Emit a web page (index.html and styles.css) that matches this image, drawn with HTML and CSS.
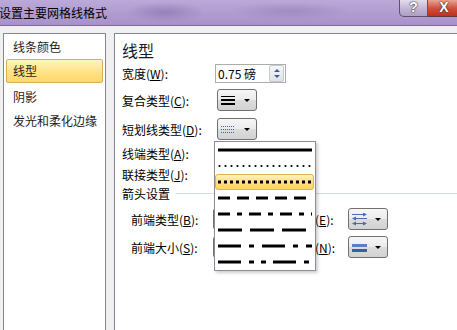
FILE: index.html
```html
<!DOCTYPE html>
<html lang="zh-CN">
<head>
    <meta charset="UTF-8">
    <title>设置主要网格线格式</title>
    <link rel="stylesheet" href="styles.css">
</head>
<body>
<div class="window">
    <div class="titlebar">
        <span class="title">设置主要网格线格式</span>
        <div class="caption">
            <span class="cap-help">?</span>
            <span class="cap-close">X</span>
        </div>
    </div>

    <div class="content">
        <ul class="nav">
            <li class="nav-item">线条颜色</li>
            <li class="nav-item active">线型</li>
            <li class="nav-item">阴影</li>
            <li class="nav-item">发光和柔化边缘</li>
        </ul>

        <div class="pane">
            <h2 class="pane-title">线型</h2>

            <div class="row row-width">
                <span class="label label-spin">宽度(<u>W</u>):</span>
                <div class="spin">
                    <span class="spin-value">0.75 磅</span>
                    <span class="spin-btns">
                        <span class="spin-up"></span>
                        <span class="spin-down"></span>
                    </span>
                </div>
            </div>

            <div class="row row-compound">
                <span class="label">复合类型(<u>C</u>):</span>
                <button class="pick">
                    <svg width="16" height="12" viewBox="0 0 16 12">
                        <rect x="1" y="2" width="14" height="1" fill="#000"/>
                        <rect x="1" y="5" width="14" height="2" fill="#000"/>
                        <rect x="1" y="9" width="14" height="2" fill="#000"/>
                    </svg>
                    <span class="caret"></span>
                </button>
            </div>

            <div class="row row-dash">
                <span class="label">短划线类型(<u>D</u>):</span>
                <button class="pick">
                    <svg width="16" height="12" viewBox="0 0 16 12">
                        <line x1="1" y1="3.5" x2="15" y2="3.5" stroke="#3f63a8" stroke-width="1" stroke-dasharray="1 1"/>
                        <line x1="1" y1="6.5" x2="15" y2="6.5" stroke="#3f63a8" stroke-width="1" stroke-dasharray="1 1"/>
                        <line x1="1" y1="9.5" x2="15" y2="9.5" stroke="#3f63a8" stroke-width="1" stroke-dasharray="1 1"/>
                    </svg>
                    <span class="caret"></span>
                </button>
            </div>

            <div class="row row-cap">
                <span class="label">线端类型(<u>A</u>):</span>
            </div>

            <div class="row row-join">
                <span class="label">联接类型(<u>J</u>):</span>
            </div>

            <div class="section">
                <span>箭头设置</span>
                <span class="section-line"></span>
            </div>

            <div class="row row-arrow">
                <span class="label label-arrow">前端类型(<u>B</u>):</span>
                <button class="pick"><span class="caret"></span></button>
                <span class="label label-end">末端类型(<u>E</u>):</span>
                <button class="pick">
                    <svg width="17" height="13" viewBox="0 0 17 13">
                        <g stroke="#4a6cb0" stroke-width="1" fill="none">
                            <line x1="1" y1="1.5" x2="15" y2="1.5"/>
                            <line x1="2" y1="5.5" x2="16" y2="5.5"/>
                            <line x1="2" y1="10.5" x2="15" y2="10.5"/>
                        </g>
                        <g fill="#4a6cb0">
                            <polygon points="16,1.5 12,-0.5 12,3.5"/>
                            <polygon points="1,5.5 5,3.5 5,7.5"/>
                            <polygon points="1,10.5 5,8.5 5,12.5"/>
                            <polygon points="16,10.5 12,8.5 12,12.5"/>
                        </g>
                    </svg>
                    <span class="caret"></span>
                </button>
            </div>

            <div class="row row-arrow">
                <span class="label label-arrow">前端大小(<u>S</u>):</span>
                <button class="pick"><span class="caret"></span></button>
                <span class="label label-end">末端大小(<u>N</u>):</span>
                <button class="pick">
                    <svg width="17" height="12" viewBox="0 0 17 12">
                        <rect x="1" y="3" width="15" height="3" fill="#5a7fc2"/>
                        <rect x="1" y="8" width="15" height="3" fill="#3c5fa4"/>
                    </svg>
                    <span class="caret"></span>
                </button>
            </div>
        </div>
    </div>

    <ul class="dropdown">
        <li class="dd-item">
            <svg width="94" height="4"><line x1="0" y1="2" x2="94" y2="2" stroke="#000" stroke-width="3"/></svg>
        </li>
        <li class="dd-item">
            <svg width="94" height="4"><line x1="1.5" y1="2" x2="94" y2="2" stroke="#000" stroke-width="2.2" stroke-linecap="round" stroke-dasharray="0 6"/></svg>
        </li>
        <li class="dd-item selected">
            <svg width="94" height="4"><line x1="0" y1="2" x2="94" y2="2" stroke="#000" stroke-width="3" stroke-dasharray="3 3"/></svg>
        </li>
        <li class="dd-item">
            <svg width="94" height="4"><line x1="0" y1="2" x2="94" y2="2" stroke="#000" stroke-width="3" stroke-dasharray="12 7"/></svg>
        </li>
        <li class="dd-item">
            <svg width="94" height="4"><line x1="0" y1="2" x2="94" y2="2" stroke="#000" stroke-width="3" stroke-dasharray="12 7 5 7"/></svg>
        </li>
        <li class="dd-item">
            <svg width="94" height="4"><line x1="0" y1="2" x2="94" y2="2" stroke="#000" stroke-width="3" stroke-dasharray="24 8"/></svg>
        </li>
        <li class="dd-item">
            <svg width="94" height="4"><line x1="0" y1="2" x2="94" y2="2" stroke="#000" stroke-width="3" stroke-dasharray="23 8 5 8"/></svg>
        </li>
        <li class="dd-item">
            <svg width="94" height="4"><line x1="0" y1="2" x2="94" y2="2" stroke="#000" stroke-width="3" stroke-dasharray="23 8 5 7 5 7"/></svg>
        </li>
    </ul>
</div>
</body>
</html>
```

FILE: styles.css
```css
body{
    margin:0;
    padding:0;
    background-color:#f0f0f0;
    font-family:"Noto Sans CJK SC","Liberation Sans",sans-serif;
    font-size:12px;
    color:#000;
}

.window{
    width:457px;
    height:330px;
    position:relative;
    overflow:hidden;
    background-color:#f0f0f0;
}

/* title bar */
.titlebar{
    height:25px;
    display:flex;
    align-items:flex-start;
    border-bottom:1px solid #7f6c9d;
    background:
        radial-gradient(ellipse 40px 10px at 165px 12px, rgba(120,95,160,0.45), transparent),
        radial-gradient(ellipse 60px 9px at 290px 11px, rgba(130,105,165,0.35), transparent),
        linear-gradient(#bba9d8,#a891c9);
}
.title{
    margin-left:-1px;
    line-height:25px;
    white-space:nowrap;
}
.caption{
    margin-left:auto;
    margin-right:-4px;
    display:flex;
}
.cap-help,.cap-close{
    height:16px;
    line-height:15px;
    text-align:center;
    font-family:"Liberation Sans",sans-serif;
    font-weight:700;
    font-size:14px;
    color:#fff;
    text-shadow:0 0 2px #333,0 0 1px #222;
}
.cap-help{
    width:27px;
    border:1px solid #5d5072;
    border-top:none;
    border-radius:0 0 0 5px;
    background:linear-gradient(#e3dcea,#c1b5d2 55%,#ad9fc3);
}
.cap-close{
    width:32px;
    border:1px solid #5d3a3a;
    border-top:none;
    border-left:none;
    background:linear-gradient(#e9a597,#d0523f 50%,#c0301e);
}

/* body */
.content{
    display:flex;
    padding:7px 0 0 3px;
    height:330px;
    gap:8px;
}
.nav{
    list-style:none;
    margin:0;
    padding:1px;
    width:99px;
    background:#fff;
    border:1px solid #828790;
}
.nav-item{
    height:24px;
    line-height:24px;
    padding-left:7px;
    margin:0 1px;
    color:#1e1e1e;
    white-space:nowrap;
}
.nav-item.active{
    height:22px;
    line-height:22px;
    padding-left:6px;
    margin-bottom:2px;
    border:1px solid #dbad55;
    border-radius:2px;
    background:linear-gradient(#fff4c3,#ffe58e 45%,#ffd766);
}

.pane{
    flex:1;
    background:#fff;
    border:1px solid #828790;
    border-right:none;
    padding:5px 0 0 7px;
}
.pane-title{
    margin:0;
    height:22px;
    line-height:22px;
    font-size:16px;
    font-weight:400;
    color:#131c2c;
}

.row{
    display:flex;
    align-items:center;
}
.label{
    width:95px;
    white-space:nowrap;
}
.label-spin{ width:93px; }
.row-width{ height:24px; }
.row-compound{ height:30px; }
.row-dash{ height:28px; }
.row-cap{ height:20px; }
.row-join{ height:22px; }
.row-arrow{
    height:28px;
    padding-left:9px;
}
.row-arrow:first-of-type{ margin-top:0; }
.section + .row-arrow{ margin-top:4px; }
.label-arrow{ width:82px; }
.label-end{
    width:68px;
    margin-left:14px;
    margin-right:13px;
}

.section{
    height:16px;
    display:flex;
    align-items:center;
    gap:6px;
}
.section-line{
    flex:1;
    height:1px;
    margin-top:1px;
    background:#d5dce6;
}

/* spin box */
.spin{
    width:67px;
    height:17px;
    border:1px solid #abadb3;
    display:flex;
    align-items:center;
    padding-left:2px;
    box-sizing:content-box;
}
.spin-value{
    flex:1;
    font-size:12px;
    line-height:17px;
}
.spin-btns{
    width:13px;
    height:15px;
    margin-right:1px;
    border:1px solid #c5c9d0;
    border-radius:2px;
    background:linear-gradient(#f6f6f6,#dfe3e8);
    display:flex;
    flex-direction:column;
    align-items:center;
    justify-content:center;
    gap:3px;
}
.spin-up,.spin-down{
    width:0;
    height:0;
    border-left:3px solid transparent;
    border-right:3px solid transparent;
}
.spin-up{ border-bottom:3px solid #3d5e98; }
.spin-down{ border-top:3px solid #3d5e98; }

/* picker buttons */
.pick{
    width:40px;
    height:22px;
    padding:0 0 0 2px;
    border:1px solid #707070;
    border-radius:3px;
    background:linear-gradient(#f6f6f6,#ebebeb 50%,#dcdcdc 51%,#d2d2d2);
    display:flex;
    align-items:center;
    box-sizing:border-box;
}
.pick svg{ display:block; }
.caret{
    margin-left:auto;
    margin-right:6px;
    width:0;
    height:0;
    border-left:3px solid transparent;
    border-right:3px solid transparent;
    border-top:3px solid #000;
}

/* dash style list */
.dropdown{
    position:absolute;
    left:214px;
    top:141px;
    width:100px;
    margin:0;
    padding:0;
    list-style:none;
    background:#fff;
    border:1px solid #8a8d93;
    box-shadow:2px 2px 3px rgba(0,0,0,0.2);
    z-index:5;
}
.dd-item{
    height:16px;
    display:flex;
    align-items:center;
    padding-left:3px;
    margin-right:1px;
    box-sizing:border-box;
}
.dd-item svg{ display:block; }
.dd-item.selected{
    padding-left:2px;
    border:1px solid #e0b152;
    border-radius:3px;
    background:linear-gradient(#fff2bb,#ffe07e 50%,#ffd563);
}
```
